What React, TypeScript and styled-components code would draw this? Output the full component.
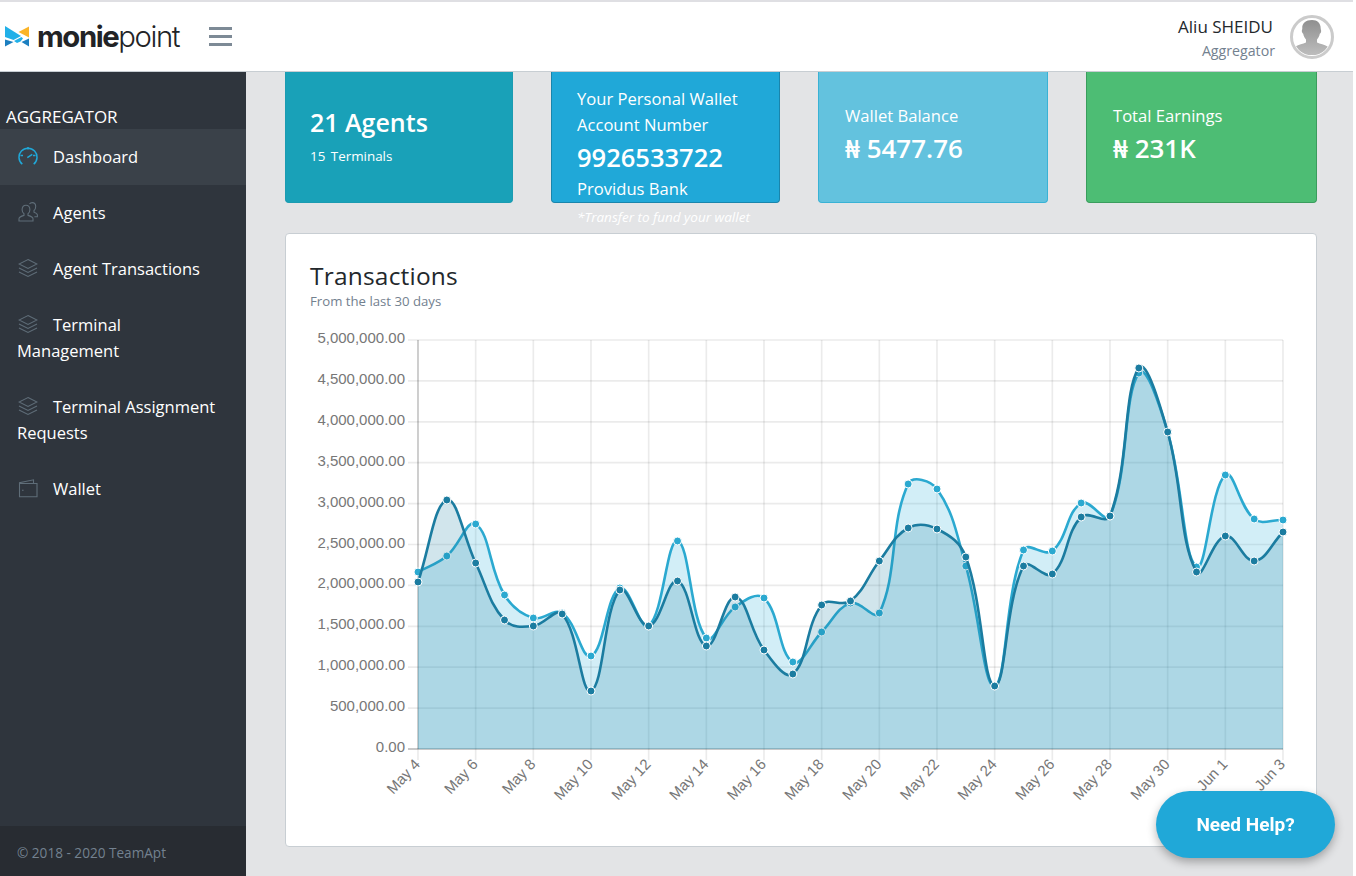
import React, { FC } from "react";
import styled, { createGlobalStyle } from "styled-components";

const GlobalStyle = createGlobalStyle`
  html, body {
    margin: 0;
    padding: 0;
    background: #fff;
    overflow: hidden;
  }
  * { box-sizing: border-box; }
`;

const BODY_FONT = `"Open Sans", "Noto Sans", sans-serif`;

const Page = styled.div`
  width: 1353px;
  height: 876px;
  display: flex;
  flex-direction: column;
  font-family: ${BODY_FONT};
  overflow: hidden;
  border-top: 2px solid #dfdfe3;
`;

const Header = styled.header`
  height: 70px;
  flex: none;
  display: flex;
  align-items: center;
  background: #fff;
  border-bottom: 1px solid #c8ced3;
  padding: 0 19px 0 5px;
`;

const Brand = styled.div`
  display: flex;
  align-items: center;
  gap: 8px;
  width: 204px;
`;

const Wordmark = styled.div`
  font-family: "Inter", sans-serif;
  font-size: 29.3px;
  line-height: 1;
  letter-spacing: -1.4px;
  color: #222326;
  font-weight: 300;
  b { font-weight: 700; }
`;

const MenuButton = styled.div`
  width: 23px;
  display: flex;
  flex-direction: column;
  gap: 5.5px;
  span {
    height: 2.5px;
    background: #7d8a96;
  }
`;

const UserBox = styled.div`
  margin-left: auto;
  display: flex;
  align-items: center;
  gap: 15px;
`;

const UserText = styled.div`
  text-align: right;
  padding-top: 4px;
`;

const UserName = styled.div`
  font-size: 17px;
  line-height: 24px;
  color: #23282c;
  margin-right: 2px;
`;

const UserRole = styled.div`
  font-size: 14.2px;
  line-height: 24px;
  color: #73818f;
`;

const Body = styled.div`
  flex: 1;
  display: flex;
  min-height: 0;
`;

const Sidebar = styled.aside`
  width: 246px;
  flex: none;
  background: #2f353d;
  display: flex;
  flex-direction: column;
  color: #fff;
`;

const SidebarTitle = styled.div`
  font-size: 17px;
  line-height: 24px;
  padding: 33px 0 0 6px;
  height: 57px;
`;

const NavItem = styled.div<{ $active?: boolean }>`
  padding: 15px 26px 15px 17px;
  font-size: 16.5px;
  line-height: 26px;
  background: ${(p) => (p.$active ? "#3a4149" : "transparent")};
  svg {
    display: inline-block;
    width: 20px;
    height: 20px;
    margin: 0 15px 0 1px;
    vertical-align: -3px;
  }
`;

const SidebarFooter = styled.div`
  margin-top: auto;
  height: 50px;
  background: #282c32;
  color: #73818f;
  font-size: 13.6px;
  line-height: 53px;
  padding-left: 17px;
`;

const Main = styled.main`
  flex: 1;
  background: #e3e4e6;
  padding: 0 36px 0 39px;
  min-width: 0;
`;

const CardRow = styled.div`
  display: grid;
  grid-template-columns: 228px 229px 230px 231px;
  justify-content: space-between;
  height: 161px;
`;

const StatColumn = styled.div`
  display: flex;
  flex-direction: column;
`;

const StatCard = styled.div<{ $bg: string; $line: string; $inset: number }>`
  height: 131px;
  flex: none;
  background: ${(p) => p.$bg};
  border: 1px solid ${(p) => p.$line};
  border-top: 0;
  border-radius: 0 0 4px 4px;
  color: #fff;
  padding: 0 ${(p) => p.$inset}px;
  display: flex;
  flex-direction: column;
`;

const Caption = styled.div`
  font-size: 13.5px;
  font-style: italic;
  color: #fff;
  line-height: 17px;
  margin: 6px 0 0 26px;
  white-space: nowrap;
`;

const AgentsCount = styled.div`
  font-size: 25px;
  font-weight: 600;
  line-height: 32px;
  margin-top: 34px;
`;

const AgentsSub = styled.div`
  font-size: 13.4px;
  line-height: 18px;
  margin-top: 9px;
  word-spacing: 2px;
`;

const WalletLine = styled.div`
  font-size: 16.6px;
  line-height: 26px;
  &:first-child { margin-top: 14px; }
`;

const AccountNumber = styled.div`
  font-size: 25.5px;
  font-weight: 600;
  line-height: 32px;
  margin: 3px 0 3px;
`;

const StatLabel = styled.div`
  font-size: 16.6px;
  line-height: 24px;
  margin-top: 32px;
`;

const StatValue = styled.div`
  font-size: 26px;
  font-weight: 600;
  line-height: 36px;
  margin-top: 2px;
`;

const ChartCard = styled.section`
  height: 614px;
  background: #fff;
  border: 1px solid #c8ced3;
  border-radius: 4px;
  padding: 25px 24px 0;
`;

const ChartTitle = styled.h2`
  margin: 0;
  font-size: 24.5px;
  font-weight: 400;
  line-height: 33px;
  color: #23282c;
  letter-spacing: 0.2px;
`;

const ChartSub = styled.div`
  font-size: 13.2px;
  line-height: 18px;
  color: #73818f;
  margin-bottom: 16px;
`;

const ChartSvg = styled.svg`
  display: block;
  width: 982px;
  height: 490px;
  overflow: visible;
`;

const AxisLabel = styled.text`
  font-family: "Liberation Sans", Arial, sans-serif;
  font-size: 15px;
  fill: #777;
`;

const HelpButton = styled.button`
  position: fixed;
  left: 1156px;
  top: 791px;
  width: 179px;
  height: 67px;
  border: 0;
  border-radius: 34px;
  background: #20a8d8;
  color: #fff;
  font-family: "Roboto", sans-serif;
  font-size: 19px;
  font-weight: 700;
  box-shadow: 0 4px 10px rgba(0, 0, 0, 0.3);
`;

const GaugeIcon = () => (
  <svg viewBox="0 0 20 20" fill="none" stroke="#20a8d8" strokeWidth="1.5">
    <path d="M4.3 18.2A9 9 0 1 1 15.700 18.2" />
    <path d="M10 1v2.500M2.500 9.500H5M15 9.500h2.500M9.300 11.600l5-3.200" />
  </svg>
);

const PeopleIcon = () => (
  <svg viewBox="0 0 20 20" fill="none" stroke="#5f6d78" strokeWidth="1.1">
    <path d="M1 19v-2.200c0-1.600 1.600-2.400 5-3.400v-1.600c-1.300-1-1.900-2.400-1.900-4 0-3 1.500-4.600 3.900-4.600s3.900 1.600 3.900 4.600c0 1.600-.6 3-1.900 4v1.600c3.400 1 5 1.800 5 3.400V19z" />
    <path d="M11.500 2c.6-.9 1.500-1.400 2.700-1.400 2.300 0 3.500 1.500 3.500 4 0 1.600-.5 3-1.700 3.900v1.700c2.200.7 3.400 1.400 3.400 2.900v1.600h-3" />
  </svg>
);

const LayersIcon = () => (
  <svg viewBox="0 0 20 20" fill="none" stroke="#5f6d78" strokeWidth="1.1">
    <path d="M10 1.500 19 6l-9 4.500L1 6z" />
    <path d="M1 10l9 4.500 9-4.500" />
    <path d="M1 14l9 4.500 9-4.500" />
  </svg>
);

const WalletIcon = () => (
  <svg viewBox="0 0 20 20" fill="none" stroke="#5f6d78" strokeWidth="1.1">
    <path d="M1.500 5.500h17.500v13.200H1.500z" />
    <path d="M1.500 5.500V4.600L15.500 1.800v3.700" />
    <path d="M4 12.200h1.600" />
  </svg>
);

const LogoMark = () => (
  <svg width="24" height="21" viewBox="0 0 24 21">
    <path d="M0 0 16 10 8.500 14 0 11z" fill="#22b0e8" />
    <path d="M24 .5V11.500L13.500 6z" fill="#fbb428" />
    <path d="M0 13.500 8.500 16 0 20.500z" fill="#1c7fc0" />
    <path d="M24 12.500V20.500L16.500 16z" fill="#1c7fc0" />
    <path d="M9 15 16.500 11 18 12.500 15.500 15.500 12 17z" fill="#22b0e8" />
  </svg>
);

const Avatar = () => (
  <svg width="44" height="44" viewBox="0 0 44 44">
    <defs>
      <linearGradient id="avatarFill" x1="0" y1="0" x2="0" y2="1">
        <stop offset="0" stopColor="#8f8f8f" />
        <stop offset="1" stopColor="#bdbdbd" />
      </linearGradient>
      <clipPath id="avatarClip">
        <circle cx="22" cy="22" r="18.500" />
      </clipPath>
    </defs>
    <circle cx="22" cy="22" r="20.500" fill="#fff" stroke="#cbcbcb" strokeWidth="3" />
    <g clipPath="url(#avatarClip)" fill="url(#avatarFill)">
      <path d="M22 5c5.500 0 8.700 3.200 8.700 8.500 0 1 .7 1.700.4 3.200-.2 1-.8 1.600-1.300 2-.5 2.800-1.800 4.800-2.800 5.800v3c3 1.500 7.500 2 10.500 4 1.500 1 2.500 3.500 2.500 8.500H3c0-5 1-7.500 2.500-8.500 3-2 7.500-2.500 10.500-4v-3c-1-1-2.300-3-2.800-5.800-.5-.4-1.100-1-1.300-2-.3-1.500.4-2.200.4-3.200C11.800 8.200 16 5 22 5z" />
    </g>
  </svg>
);

// pixel heights read off the reference, one per day from May 4 to Jun 3
const DARK = [581, 499, 562, 619, 625, 613, 690, 589, 625, 580, 645, 596, 649, 673, 604, 600, 560, 527, 528, 556, 685, 565, 573, 516, 515, 367, 431, 571, 535, 560, 531];
const LIGHT = [571, 555, 523, 594, 617, 612, 655, 587, 625, 540, 637, 606, 597, 661, 631, 602, 612, 483, 488, 565, 685, 549, 550, 502, 515, 372, 431, 566, 474, 518, 519];

const CHART_LEFT = 418;
const CHART_RIGHT = 1283;
const CHART_TOP = 339;
const CHART_BOTTOM = 748;
const DAY = (CHART_RIGHT - CHART_LEFT) / 30;

const Y_LABELS = ["5,000,000.00", "4,500,000.00", "4,000,000.00", "3,500,000.00", "3,000,000.00", "2,500,000.00", "2,000,000.00", "1,500,000.00", "1,000,000.00", "500,000.00", "0.00"];
const X_LABELS = ["May 4", "May 6", "May 8", "May 10", "May 12", "May 14", "May 16", "May 18", "May 20", "May 22", "May 24", "May 26", "May 28", "May 30", "Jun 1", "Jun 3"];

// same spline as the chart library: tension 0.4 on neighbouring points
const linePath = (values: number[]) => {
  const pts = values.map((y, i) => ({ x: CHART_LEFT + i * DAY, y }));
  const ctrl = pts.map((p, i) => {
    const a = pts[i - 1] || p;
    const b = pts[i + 1] || p;
    const d1 = Math.hypot(p.x - a.x, p.y - a.y);
    const d2 = Math.hypot(b.x - p.x, b.y - p.y);
    const sum = d1 + d2 || 1;
    const dx = b.x - a.x;
    const dy = b.y - a.y;
    return {
      px: p.x - 0.4 * (d1 / sum) * dx,
      py: p.y - 0.4 * (d1 / sum) * dy,
      nx: p.x + 0.4 * (d2 / sum) * dx,
      ny: p.y + 0.4 * (d2 / sum) * dy,
    };
  });
  let d = `M${pts[0].x} ${pts[0].y}`;
  for (let i = 1; i < pts.length; i++) {
    d += `C${ctrl[i - 1].nx} ${ctrl[i - 1].ny} ${ctrl[i].px} ${ctrl[i].py} ${pts[i].x} ${pts[i].y}`;
  }
  return d;
};

const Series: FC<{ values: number[]; color: string; fill: string }> = ({ values, color, fill }) => {
  const d = linePath(values);
  return (
    <g>
      <path d={`${d}L${CHART_RIGHT} ${CHART_BOTTOM}L${CHART_LEFT} ${CHART_BOTTOM}Z`} fill={fill} />
      <path d={d} fill="none" stroke={color} strokeWidth="2.6" />
      {values.map((y, i) => (
        <circle key={i} cx={CHART_LEFT + i * DAY} cy={y} r="4" fill={color} stroke="#fff" strokeWidth="1" />
      ))}
    </g>
  );
};

const TransactionsChart: FC = () => (
  <ChartSvg viewBox="310 325 982 490">
    {Y_LABELS.map((label, i) => {
      const y = CHART_TOP + (i * (CHART_BOTTOM - CHART_TOP)) / 10;
      return (
        <g key={label}>
          <line x1={408} x2={CHART_RIGHT} y1={y} y2={y} stroke="rgba(0,0,0,0.08)" strokeWidth="1.7" />
          <AxisLabel x={405} y={y + 3} textAnchor="end">{label}</AxisLabel>
        </g>
      );
    })}
    {X_LABELS.map((label, i) => {
      const x = CHART_LEFT + i * 2 * DAY;
      return (
        <g key={label}>
          <line x1={x} x2={x} y1={CHART_TOP} y2={759} stroke="rgba(0,0,0,0.08)" strokeWidth="1.7" />
          <AxisLabel x={x + 3} y={764} textAnchor="end" transform={`rotate(-47 ${x + 3} 764)`}>{label}</AxisLabel>
        </g>
      );
    })}
    <line x1={CHART_LEFT} x2={CHART_LEFT} y1={CHART_TOP} y2={CHART_BOTTOM} stroke="rgba(0,0,0,0.18)" strokeWidth="1.5" />
    <line x1={408} x2={CHART_RIGHT} y1={CHART_BOTTOM} y2={CHART_BOTTOM} stroke="rgba(0,0,0,0.22)" strokeWidth="1.5" />
    <Series values={LIGHT} color="#2ba9d0" fill="rgba(32,168,216,0.2)" />
    <Series values={DARK} color="#1b7ca0" fill="rgba(27,124,160,0.2)" />
  </ChartSvg>
);

export default function App() {
  return (
    <>
      <GlobalStyle />
      <Page>
        <Header>
          <Brand>
            <LogoMark />
            <Wordmark><b>monie</b>point</Wordmark>
          </Brand>
          <MenuButton><span /><span /><span /></MenuButton>
          <UserBox>
            <UserText>
              <UserName>Aliu SHEIDU</UserName>
              <UserRole>Aggregator</UserRole>
            </UserText>
            <Avatar />
          </UserBox>
        </Header>
        <Body>
          <Sidebar>
            <SidebarTitle>AGGREGATOR</SidebarTitle>
            <NavItem $active><GaugeIcon />Dashboard</NavItem>
            <NavItem><PeopleIcon />Agents</NavItem>
            <NavItem><LayersIcon />Agent Transactions</NavItem>
            <NavItem><LayersIcon />Terminal Management</NavItem>
            <NavItem><LayersIcon />Terminal Assignment Requests</NavItem>
            <NavItem><WalletIcon />Wallet</NavItem>
            <SidebarFooter>© 2018 - 2020 TeamApt</SidebarFooter>
          </Sidebar>
          <Main>
            <CardRow>
              <StatColumn>
                <StatCard $bg="#19a1b8" $line="#1b9bb1" $inset={24}>
                  <AgentsCount>21 Agents</AgentsCount>
                  <AgentsSub>15 Terminals</AgentsSub>
                </StatCard>
              </StatColumn>
              <StatColumn>
                <StatCard $bg="#20a8d8" $line="#1985ac" $inset={25}>
                  <WalletLine>Your Personal Wallet</WalletLine>
                  <WalletLine>Account Number</WalletLine>
                  <AccountNumber>9926533722</AccountNumber>
                  <WalletLine>Providus Bank</WalletLine>
                </StatCard>
                <Caption>*Transfer to fund your wallet</Caption>
              </StatColumn>
              <StatColumn>
                <StatCard $bg="#63c2de" $line="#39b2d5" $inset={26}>
                  <StatLabel>Wallet Balance</StatLabel>
                  <StatValue>₦ 5477.76</StatValue>
                </StatCard>
              </StatColumn>
              <StatColumn>
                <StatCard $bg="#4dbd74" $line="#3a9d5d" $inset={26}>
                  <StatLabel>Total Earnings</StatLabel>
                  <StatValue>₦ 231K</StatValue>
                </StatCard>
              </StatColumn>
            </CardRow>
            <ChartCard>
              <ChartTitle>Transactions</ChartTitle>
              <ChartSub>From the last 30 days</ChartSub>
              <TransactionsChart />
            </ChartCard>
          </Main>
        </Body>
      </Page>
      <HelpButton>Need Help?</HelpButton>
    </>
  );
}
